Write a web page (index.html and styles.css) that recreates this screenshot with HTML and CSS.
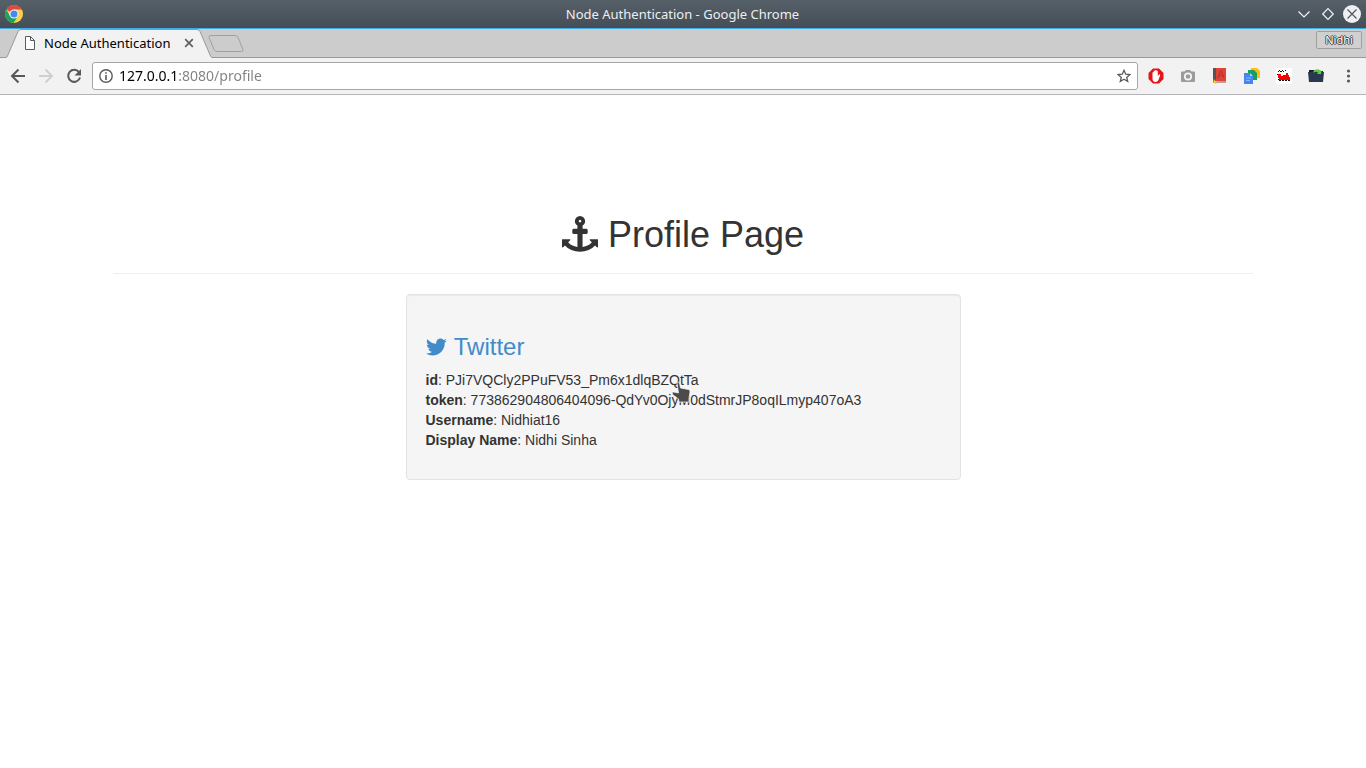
FILE: index.html
```html
<!DOCTYPE html>
<html lang="en">
<head>
<meta charset="utf-8">
<title>Node Authentication</title>
<link rel="stylesheet" href="styles.css">
</head>
<body>
<header class="titlebar">
  <svg class="chrome-logo" viewBox="0 0 20 20" aria-hidden="true">
    <circle cx="10" cy="10" r="9" fill="#fdd04b"/>
    <path d="M10 10 2.200 5.500A9 9 0 0 1 17.800 5.500H10z" fill="#de4b3e"/>
    <path d="M2.200 5.500A9 9 0 0 0 9.500 19L14 12.200 10 10 6 12z" fill="#1da261"/>
    <circle cx="10" cy="10" r="4.600" fill="#f4f4f4"/>
    <circle cx="10" cy="10" r="3.500" fill="#4688f1"/>
  </svg>
  <span class="window-title">Node Authentication - Google Chrome</span>
  <div class="window-controls">
    <button class="icon-button" aria-label="Minimize"><svg width="18" height="18" viewBox="0 0 18 18" fill="none" stroke="#f2f4f5" stroke-width="1.200"><path d="M3.500 6.500 9 12l5.500-5.500"/></svg></button>
    <button class="icon-button" aria-label="Maximize"><svg width="18" height="18" viewBox="0 0 18 18" fill="none" stroke="#f2f4f5" stroke-width="1.200"><path d="M9 3.700 14.300 9 9 14.300 3.700 9z"/></svg></button>
    <button class="icon-button" aria-label="Close window"><svg width="18" height="18" viewBox="0 0 18 18"><circle cx="9" cy="9" r="9" fill="#eff0f1"/><path d="M4.500 4.500l9 9m0-9l-9 9" stroke="#4d565d" stroke-width="1.200"/></svg></button>
  </div>
</header>
<nav class="tabstrip" aria-label="Tabs">
  <div class="tab">
    <svg class="tab-shape" viewBox="0 0 206 29" preserveAspectRatio="none" aria-hidden="true"><path d="M0 28.500Q1 28 1.500 27L12 2.500q1-2 3-2h176q2 0 3 2L204.500 27q.5 1 1.500 1.500V29H0z" fill="#f2f2f2"/><path d="M0 28.500Q1 28 1.500 27L12 2.500q1-2 3-2h176q2 0 3 2L204.500 27q.5 1 1.500 1.500" fill="none" stroke="#999"/></svg>
    <svg class="tab-icon" viewBox="0 0 12 16" fill="#fff" stroke="#5a5a5a" aria-hidden="true"><path d="M1.500 1.500h5l4 4v9h-9zM6.500 1.500v4h4"/></svg>
    <span class="tab-title">Node Authentication</span>
    <button class="icon-button tab-close" aria-label="Close tab"><svg width="12" height="12" viewBox="0 0 12 12" stroke="#5f5f5f" stroke-width="1.700"><path d="M2.200 2.200l7.600 7.600m0-7.600l-7.600 7.600"/></svg></button>
  </div>
  <button class="icon-button new-tab" aria-label="New tab"><svg width="36" height="19" viewBox="0 0 36 19"><path d="M3 1.500h24q2 0 3 2l5 12q.5 2-1.500 2H9q-2 0-3-2L1 3.500q-.5-2 2-2z" fill="#ccc" stroke="#a0a0a0"/></svg></button>
  <button class="profile-button">Nidhi</button>
</nav>
<div class="toolbar">
  <div class="nav-buttons">
    <button class="icon-button" aria-label="Back"><svg width="16" height="16" viewBox="0 0 16 16" fill="none" stroke="#585858" stroke-width="2"><path d="M15 8H2.500M8.500 1.500 2 8l6.500 6.500"/></svg></button>
    <button class="icon-button" aria-label="Forward" disabled><svg width="16" height="16" viewBox="0 0 16 16" fill="none" stroke="#cfcfcf" stroke-width="2"><path d="M1 8h12.500M7.500 1.500 14 8l-6.500 6.500"/></svg></button>
    <button class="icon-button" aria-label="Reload"><svg width="16" height="16" viewBox="0 0 16 16"><path d="M13 4.200A6 6 0 1 0 14 9.500" fill="none" stroke="#585858" stroke-width="2"/><path d="M15 1v6.500H8.500z" fill="#585858"/></svg></button>
  </div>
  <div class="omnibox">
    <svg width="14" height="14" viewBox="0 0 14 14" aria-hidden="true"><circle cx="7" cy="7" r="6.200" fill="none" stroke="#5a5a5a" stroke-width="1.400"/><path d="M6.200 3.200h1.600v1.600H6.200zM6.200 6h1.600v5H6.200z" fill="#5a5a5a"/></svg>
    <input class="url" type="text" aria-label="Address" value="127.0.0.1:8080/profile">
    <button class="icon-button" aria-label="Bookmark this page"><svg width="14" height="14" viewBox="0 0 14 14" fill="none" stroke="#5a5a5a" stroke-width="1.300"><path d="M7 1.300 8.700 5.200l4.200.4-3.200 2.800 1 4.100L7 10.300l-3.700 2.200 1-4.100L1.100 5.600l4.200-.4z"/></svg></button>
  </div>
  <div class="extensions">
    <button class="icon-button" aria-label="Ad blocker"><svg width="16" height="16" viewBox="0 0 16 16"><path d="M5 .5h6L15.500 5v6L11 15.500H5L.5 11V5z" fill="#e0161b"/><path d="M4.500 8V4.500q.7-.8 1.200 0V7V3q.7-.9 1.300 0v3.500V2.300q.8-.8 1.400 0v4.200V3q.8-.8 1.400 0v5l1.400-1.700q1-.2 1 .6L10.500 12q-1 2-3 2-2.700 0-3-3z" fill="#fff"/></svg></button>
    <button class="icon-button" aria-label="Screen capture"><svg width="16" height="16" viewBox="0 0 16 16"><path d="M2 3.500h2.500L6 2h4l1.500 1.500H14q1 0 1 1V13q0 1-1 1H2q-1 0-1-1V4.500q0-1 1-1z" fill="#9b9b9b"/><circle cx="8" cy="8.500" r="3.200" fill="none" stroke="#f6f6f6" stroke-width="1.700"/></svg></button>
    <button class="icon-button" aria-label="Dictionary"><svg width="16" height="16" viewBox="0 0 16 16"><path d="M1 0h4v15H1z" fill="#5b5254"/><path d="M4 0h10v13H4z" fill="#df4335"/><path d="M4 13h10v2H4z" fill="#b9a09a"/><path d="M6 10 8.700 3h.6L12 10M7.200 7.500h3.600" fill="none" stroke="#bd3329" stroke-width="1.200"/><path d="M2 11l1.500 2H6l-2 1 .5 2L2 15H1z" fill="#f6c72d"/></svg></button>
    <button class="icon-button" aria-label="Copy documents"><svg width="16" height="16" viewBox="0 0 16 16"><path d="M7 0h6l3 3v7H7z" fill="#fbbc16"/><path d="M4 2h6l3 3v7H4z" fill="#14a05c"/><path d="M0 5h6l3 3v8H0z" fill="#4285f4"/><path d="M6 5v3h3z" fill="#a6c6fa"/><path d="M2 10h5M2 12.500h4" stroke="#8fb7fa"/></svg></button>
    <button class="icon-button" aria-label="Train"><svg width="16" height="16" viewBox="0 0 16 16" shape-rendering="crispEdges"><path d="M0 0h16v16H0z" fill="#fff"/><path d="M1 6h4v2h2V7h3V5h2v2h1v2h1v3H3v-2H2V7H1z" fill="#f00"/><path d="M2 3h1v1H2zM3 2h1v1H3zM4 3h1v1H4zM6 2h1v1H6zM5 3h1v1H5zM7 3h1v1H7zM9 2h1v1H9zM1 6h1v1H1zM2 11h1v1H2zM3 12h2v1H3zM6 12h2v1H6zM9 12h2v1H9zM12 12h2v1h-2z" fill="#111"/></svg></button>
    <button class="icon-button" aria-label="Folder"><svg width="16" height="16" viewBox="0 0 16 16"><path d="M1 2h5l1 1h8v11H1z" fill="#18202b"/><path d="M0 4h16l-1 10H1z" fill="#2b3950"/><path d="M5 4q2-4 7-2l1.500 1-.5 3H9l1-1.500Q8 3 6 4.500z" fill="#5cd036"/></svg></button>
    <button class="icon-button menu-button" aria-label="Menu"><svg width="16" height="16" viewBox="0 0 16 16" fill="#5a5a5a"><circle cx="8.500" cy="3" r="1.600"/><circle cx="8.500" cy="8" r="1.600"/><circle cx="8.500" cy="13" r="1.600"/></svg></button>
  </div>
</div>
<main class="container">
  <h1 class="page-title"><svg class="anchor-icon" viewBox="0 0 1792 1792" fill="currentColor" aria-hidden="true"><path d="M960 256q0-26-19-45t-45-19-45 19-19 45 19 45 45 19 45-19 19-45zm832 928v352q0 22-20 30-8 2-12 2-13 0-23-9l-93-93q-119 143-318.500 226.500t-429.500 83.500-429.500-83.500-318.500-226.500l-93 93q-9 9-23 9-4 0-12-2-20-8-20-30v-352q0-14 9-23t23-9h352q22 0 30 20 8 19-7 35l-100 100q67 91 189.500 153.500t271.500 82.500v-647h-192q-26 0-45-19t-19-45v-128q0-26 19-45t45-19h192v-163q-58-34-93-92.500t-35-128.500q0-106 75-181t181-75 181 75 75 181q0 70-35 128.500t-93 92.500v163h192q26 0 45 19t19 45v128q0 26-19 45t-45 19h-192v647q149-20 271.500-82.500t189.500-153.500l-100-100q-15-16-7-35 8-20 30-20h352q14 0 23 9t9 23z"/></svg> Profile Page</h1>
  <section class="well">
    <h3 class="provider"><svg class="twitter-icon" viewBox="108 0 1664 1792" fill="currentColor" aria-hidden="true"><path d="M1684 408q-67 98-162 167 1 14 1 42 0 130-38 259.500t-115.500 248.500-184.500 210.500-258 146-323 54.500q-271 0-496-145 35 4 78 4 225 0 401-138-105-2-188-64.500t-114-159.500q33 5 61 5 43 0 85-11-112-23-185.500-111.500t-73.500-205.500v-4q68 38 146 41-66-44-105-115t-39-154q0-88 44-163 121 149 294.500 238.500t371.500 99.500q-8-38-8-74 0-134 94.500-228.500t228.500-94.500q140 0 236 102 109-21 205-78-37 115-142 178 93-10 186-50z"/></svg> Twitter</h3>
    <p class="details">
      <strong>id</strong>: PJi7VQCly2PPuFV53_Pm6x1dlqBZQtTa<br>
      <strong>token</strong>: 773862904806404096-QdYv0OjyM0dStmrJP8oqILmyp407oA3<br>
      <strong>Username</strong>: Nidhiat16<br>
      <strong>Display Name</strong>: Nidhi Sinha
    </p>
    <svg class="pointer" viewBox="0 0 20 22" aria-hidden="true"><path d="M6 2Q7.200 0 8.500 2l1 5 8 1.500q2 .5 1.500 2.500l-1 6v4H8l-.5-3-6-4.500q-1-2 1-2.500l5 1z" fill="#4b4b4b" stroke="#fafafa" stroke-width=".7"/></svg>
  </section>
</main>
</body>
</html>
```
FILE: styles.css
```css
* {
  box-sizing: border-box;
}

body {
  margin: 0;
  background: #fff;
  color: #333;
  font: 14px/20px "Liberation Sans", Arial, sans-serif;
}

button,
input {
  font-family: "Noto Sans", sans-serif;
}

svg {
  display: block;
  flex: none;
}

.icon-button {
  display: flex;
  padding: 0;
  border: 0;
  background: none;
}

.titlebar {
  display: grid;
  grid-template-columns: 1fr auto 1fr;
  align-items: center;
  height: 29px;
  padding: 0 5px 0 4px;
  border-bottom: 1px solid #3daee9;
  background: linear-gradient(#566068, #454e56);
  color: #eceeef;
  font: 13px/18px "Noto Sans", sans-serif;
}

.chrome-logo {
  width: 20px;
  height: 20px;
}

.window-controls {
  display: flex;
  justify-content: flex-end;
  gap: 6px;
}

.tabstrip {
  display: flex;
  align-items: center;
  height: 29px;
  padding: 0 4px 0 6px;
  background: #ccc;
  box-shadow: inset 0 -1px #999;
}

.tab {
  position: relative;
  display: flex;
  align-items: center;
  width: 206px;
  height: 29px;
  padding: 0 17px 2px 18px;
  color: #000;
  font: 13px/18px "Noto Sans", sans-serif;
}

.tab > * {
  position: relative;
}

.tab .tab-shape {
  position: absolute;
  inset: 0;
  width: 100%;
  height: 100%;
}

.tab-icon {
  width: 12px;
  height: 16px;
  margin-right: 8px;
}

.tab-close {
  margin-left: auto;
}

.new-tab {
  margin-left: -4px;
}

.profile-button {
  width: 46px;
  height: 18px;
  margin: 0 0 8px auto;
  padding: 0;
  border: 1px solid #a0a0a0;
  border-radius: 2px;
  background: #d0d0d0;
  color: #fff;
  font-size: 11px;
  line-height: 14px;
  text-shadow: 1px 0 #444, -1px 0 #444, 0 1px #444, 0 -1px #444;
}

.toolbar {
  display: flex;
  align-items: center;
  height: 37px;
  padding: 0 10px;
  border-bottom: 1px solid #b6b4b6;
  background: #f2f2f2;
}

.nav-buttons {
  display: flex;
  gap: 12px;
  margin-right: 10px;
}

.omnibox {
  display: flex;
  flex: 1;
  align-items: center;
  height: 28px;
  padding: 0 6px;
  border: 1px solid #a6a6a6;
  border-radius: 3px;
  background: #fff;
}

.url {
  flex: 1;
  min-width: 0;
  margin: 0 6px;
  padding: 0;
  border: 0;
  outline: 0;
  background: linear-gradient(90deg, #000 60px, #808080 60px);
  background-clip: text;
  color: transparent;
  font-size: 14px;
  line-height: 20px;
}

.extensions {
  display: flex;
  gap: 16px;
  margin-left: 10px;
}

.container {
  max-width: 1170px;
  margin: 0 auto;
  padding: 80px 15px 0;
}

.page-title {
  margin: 0 0 20px;
  padding: 40px 0 18px;
  border-bottom: 1px solid #eee;
  font-size: 36px;
  font-weight: 400;
  line-height: 40px;
  text-align: center;
}

.anchor-icon {
  display: inline-block;
  width: 36px;
  height: 36px;
  vertical-align: -5px;
}

.well {
  position: relative;
  width: 555px;
  max-width: 100%;
  margin: 0 auto 20px;
  padding: 39px 19px 29px;
  border: 1px solid #e3e3e3;
  border-radius: 4px;
  background: #f5f5f5;
  box-shadow: inset 0 1px 1px rgba(0, 0, 0, 0.05);
}

.provider {
  margin: 0 0 10px;
  color: #428bca;
  font-size: 24px;
  font-weight: 400;
  line-height: 26px;
}

.twitter-icon {
  display: inline-block;
  width: 22px;
  height: 24px;
  vertical-align: -4px;
}

.details {
  margin: 0;
}

.pointer {
  position: absolute;
  top: 86px;
  left: 264px;
  width: 20px;
  height: 22px;
}
```
